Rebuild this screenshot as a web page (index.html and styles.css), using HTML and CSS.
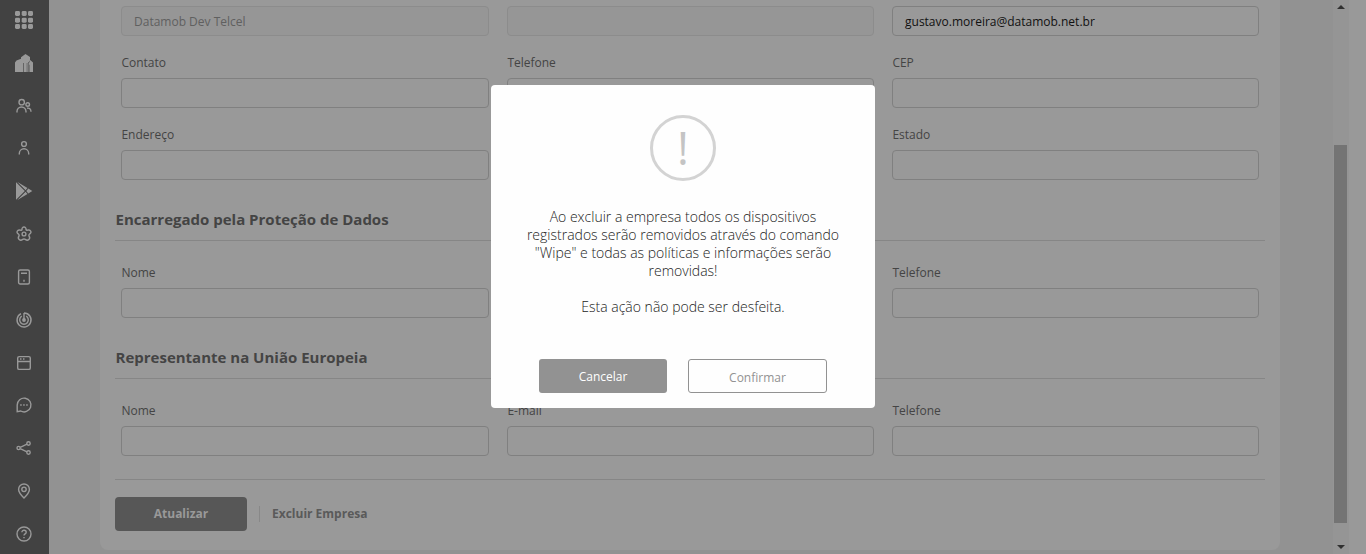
FILE: index.html
```
<!DOCTYPE html>
<html lang="pt-BR">
<head>
<meta charset="utf-8">
<title>Empresa</title>
<link rel="stylesheet" href="styles.css">
</head>
<body>
<div class="app">
  <nav class="sidebar">
    <svg class="icon" viewBox="0 0 24 24"><g class="solid"><rect x="3" y="3" width="5" height="5" rx="1.4"/><rect x="9.7" y="3" width="5" height="5" rx="1.4"/><rect x="16" y="3" width="5" height="5" rx="1.4"/><rect x="3" y="9.7" width="5" height="5" rx="1.4"/><rect x="9.7" y="9.7" width="5" height="5" rx="1.4"/><rect x="16" y="9.7" width="5" height="5" rx="1.4"/><rect x="3" y="16" width="5" height="5" rx="1.4"/><rect x="9.7" y="16" width="5" height="5" rx="1.4"/><rect x="16" y="16" width="5" height="5" rx="1.4"/></g></svg>
    <svg class="icon" viewBox="0 0 24 24"><g class="solid"><path d="M3 21V11.500l1.500-2L9 7.800V6.200L13.500 3 18 6v3.500l-2 2.500h-5v9z"/><path d="M11.600 11.500h3.200V21h-3.200zM15.300 12h1.200v9h-1.200zM17 13.500V12l1.200-3 2.800 2.500V21h-3.600v-7z"/></g></svg>
    <svg class="icon" viewBox="0 0 24 24"><circle cx="9.700" cy="8.200" r="2.700"/><circle cx="15.700" cy="10.500" r="1.800"/><path d="M5 18.500v-1a4.500 4.500 0 0 1 9 0v1M15 14.200c2.400-.5 4 .8 4 3.600"/></svg>
    <svg class="icon" viewBox="0 0 24 24"><circle cx="12" cy="8" r="2.400"/><path d="M7.300 18.500v-1a4.700 4.700 0 0 1 9.400 0v1"/></svg>
    <svg class="icon" viewBox="0 0 24 24"><path class="solid" d="M4 3v18l9-9z"/><path class="solid" d="M5 2.800l10.500 6.300-2 2.200zM5 21.200l10.500-6.300-2-2.200zM16.300 9.600l4 2.400-4 2.400-2.200-2.400z"/><path class="cut" d="M4.500 3l10.500 10.500M4.500 21L15 10.500"/></svg>
    <svg class="icon" viewBox="0 0 24 24"><path d="M10 7.500C9.700 4.200 14.300 4.200 14 7.500q.3 1 1.400.7c3.300-1.200 5 2.600 2 4q-1 .8-.4 1.800c2 2.800-1.200 5.500-3.700 3.400q-1.300-.8-2.600 0c-2.500 2.100-5.700-.6-3.700-3.400q.6-1-.4-1.800c-3-1.400-1.300-5.200 2-4q1.100.3 1.400-.7z"/><circle cx="12" cy="12" r="1.900"/></svg>
    <svg class="icon" viewBox="0 0 24 24"><rect x="6.600" y="5" width="10.800" height="14" rx="1.500"/><path d="M9 8.200h6M12 14.800v2"/></svg>
    <svg class="icon" viewBox="0 0 24 24"><path d="M12 5v7M12 5a7 7 0 1 1-3 .7M9.800 8.200a4.300 4.300 0 1 0 4.400 0"/><circle class="solid" cx="12" cy="12" r="1.900"/></svg>
    <svg class="icon" viewBox="0 0 24 24"><rect x="5.700" y="5.600" width="12.600" height="12.800" rx="1.500"/><path d="M6 10.500h12M8 8h1.500M11 8h1.500"/></svg>
    <svg class="icon" viewBox="0 0 24 24"><path d="M5.200 18.700V12a6.900 6.900 0 1 1 3.500 6z"/><path d="M8.200 12h1.500M11.200 12h1.500M14.200 12h1.500"/></svg>
    <svg class="icon" viewBox="0 0 24 24"><circle cx="6.600" cy="12" r="1.600"/><circle cx="16.500" cy="7.500" r="1.700"/><circle cx="16.500" cy="16.500" r="1.700"/><path d="M8.200 11.300L15 8.200M8.200 12.700l6.800 3.100"/></svg>
    <svg class="icon" viewBox="0 0 24 24"><path d="M12 19c-3-3-5.400-5.600-5.400-8.600a5.400 5.400 0 0 1 10.800 0c0 3-2.400 5.600-5.400 8.600z"/><circle cx="12" cy="10.300" r="2.200"/></svg>
    <svg class="icon" viewBox="0 0 24 24"><circle cx="12" cy="12" r="7"/><path d="M9.900 10.300c0-2.900 4.300-2.500 4.300 0 0 1.700-2.200 1.500-2.200 3.200M12 15v1.300"/></svg>
  </nav>
  <main class="content">
    <form class="card">
      <div class="grid">
        <div class="input disabled">Datamob Dev Telcel</div>
        <div class="input disabled"></div>
        <div class="input">gustavo.moreira@datamob.net.br</div>
        <label class="field">Contato<span class="input"></span></label>
        <label class="field">Telefone<span class="input"></span></label>
        <label class="field">CEP<span class="input"></span></label>
        <label class="field">Endereço<span class="input"></span></label>
        <label class="field">Cidade<span class="input"></span></label>
        <label class="field">Estado<span class="input"></span></label>
      </div>
      <h2 class="section">Encarregado pela Proteção de Dados</h2>
      <div class="grid spaced">
        <label class="field">Nome<span class="input"></span></label>
        <label class="field">E-mail<span class="input"></span></label>
        <label class="field">Telefone<span class="input"></span></label>
      </div>
      <h2 class="section">Representante na União Europeia</h2>
      <div class="grid spaced">
        <label class="field">Nome<span class="input"></span></label>
        <label class="field">E-mail<span class="input"></span></label>
        <label class="field">Telefone<span class="input"></span></label>
      </div>
      <div class="actions">
        <span class="update">Atualizar</span>
        <span class="remove">Excluir Empresa</span>
      </div>
    </form>
  </main>
  <div class="scrollbar">
    <svg class="arrow" viewBox="0 0 8 4"><path d="M0 4L4 0l4 4z"/></svg>
    <div class="thumb"></div>
    <svg class="arrow" viewBox="0 0 8 4"><path d="M0 0h8L4 4z"/></svg>
  </div>
</div>
<div class="overlay">
  <div class="modal">
    <div class="warning"><span class="mark">!</span></div>
    <p class="message">Ao excluir a empresa todos os dispositivos<br>registrados serão removidos através do comando<br>"Wipe" e todas as políticas e informações serão<br>removidas!<br><br>Esta ação não pode ser desfeita.</p>
    <div class="buttons">
      <span class="cancel">Cancelar</span>
      <span class="confirm">Confirmar</span>
    </div>
  </div>
</div>
</body>
</html>
```
FILE: styles.css
```
* { box-sizing: border-box; }
body {
  margin: 0;
  height: 554px;
  overflow: hidden;
  background: #999;
  color: #444;
  font: 12px/18px "Open Sans", sans-serif;
}
.app { display: flex; height: 554px; }
.sidebar {
  width: 49px;
  background: #424242;
  display: flex;
  flex-direction: column;
  align-items: center;
  gap: 18.83px;
  padding: 8px 1px 0 0;
}
.icon {
  width: 24px;
  height: 24px;
  flex: none;
  fill: none;
  stroke: #999;
  stroke-width: 1.4;
}
.icon .solid { fill: #999; stroke: none; }
.icon .cut { stroke: #424242; stroke-width: .8; }
.content { width: 1284px; background: #929292; padding: 0 53px 0 51px; }
.card {
  height: 550px;
  padding: 6px 15px 0;
  background: #999;
  border-radius: 0 0 8px 8px;
}
.grid {
  display: grid;
  grid-template-columns: 368px 367px 367px;
  column-gap: 18px;
  padding: 0 6px;
}
.field {
  display: flex;
  flex-direction: column;
  padding-top: 18px;
  text-indent: .4px;
}
.field .input { margin-top: 6px; }
.spaced .field { padding-top: 23px; }
.input {
  height: 30px;
  border: 1px solid #808080;
  border-radius: 4px;
  padding: 6px 12px;
  color: #111;
}
.disabled { background: #969696; border-color: #8c8c8c; color: #606060; }
.section {
  margin: 0;
  height: 61px;
  padding-top: 29px;
  text-indent: .5px;
  border-bottom: 1px solid #868686;
  font-size: 15px;
  line-height: 20px;
  font-weight: 700;
}
.actions {
  margin-top: 23px;
  border-top: 1px solid #868686;
  padding-top: 17px;
  display: flex;
  align-items: center;
  font-weight: 700;
}
.update {
  width: 132px;
  height: 34px;
  border-radius: 4px;
  background: #575757;
  color: #999;
  text-align: center;
  line-height: 34px;
}
.remove {
  margin-left: 12px;
  padding-left: 12px;
  border-left: 1px solid #888;
  line-height: 16px;
  color: #5a5a5a;
}
.scrollbar {
  width: 16px;
  background: #959595;
  padding: 5px 2px 5px 1px;
  display: flex;
  flex-direction: column;
  align-items: center;
}
.arrow { width: 8px; height: 4px; fill: #303030; flex: none; }
.thumb { width: 13px; height: 378px; margin: 136px 0 auto; background: #747474; }
.overlay {
  position: absolute;
  inset: 0;
  padding-top: 85px;
  display: flex;
  justify-content: center;
  align-items: flex-start;
}
.modal {
  width: 384px;
  height: 323px;
  padding-top: 30px;
  background: #fefefe;
  border-radius: 4px;
  display: flex;
  flex-direction: column;
  align-items: center;
}
.warning {
  width: 66px;
  height: 66px;
  border: 3px solid #d3d3d3;
  border-radius: 50%;
  display: flex;
  align-items: center;
  justify-content: center;
}
.mark { font-size: 45px; line-height: 60px; font-weight: 400; color: #c4c4c4; }
.message {
  margin: 27px 0 0;
  font-size: 14px;
  line-height: 18px;
  font-weight: 300;
  text-align: center;
  color: #222;
}
.buttons { display: flex; gap: 21px; margin-top: 43px; }
.cancel, .confirm { height: 34px; border-radius: 3px; text-align: center; }
.cancel { width: 128px; line-height: 35px; background: #929292; color: #fff; }
.confirm { width: 139px; border: 1px solid #929292; line-height: 35px; color: #929292; }
```
